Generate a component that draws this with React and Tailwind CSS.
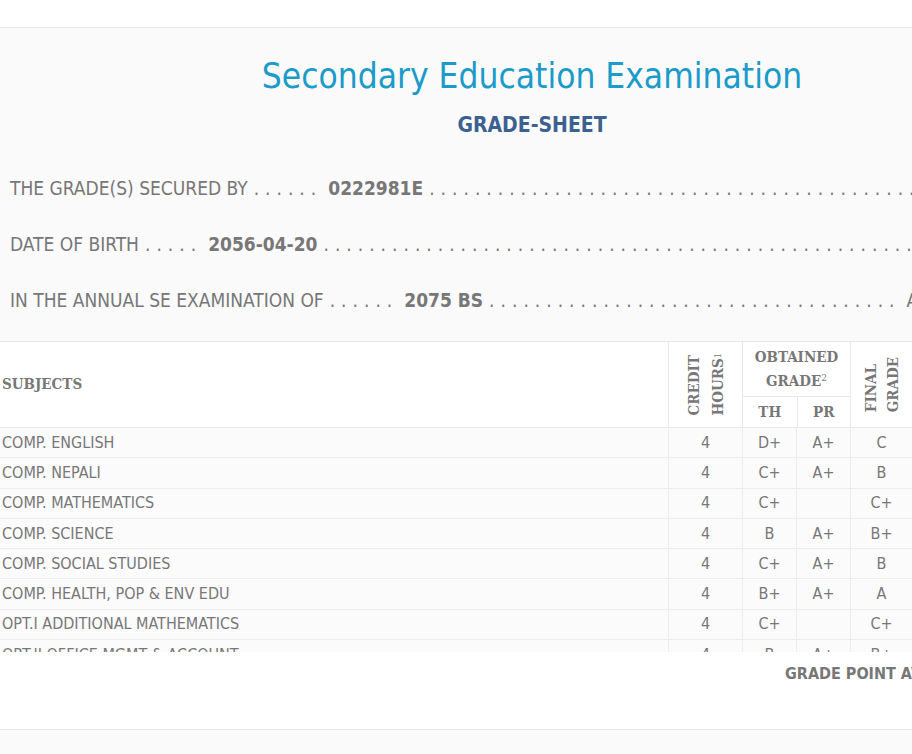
import React from 'react';

const rows = [
  ['COMP. ENGLISH', '4', 'D+', 'A+', 'C'],
  ['COMP. NEPALI', '4', 'C+', 'A+', 'B'],
  ['COMP. MATHEMATICS', '4', 'C+', '', 'C+'],
  ['COMP. SCIENCE', '4', 'B', 'A+', 'B+'],
  ['COMP. SOCIAL STUDIES', '4', 'C+', 'A+', 'B'],
  ['COMP. HEALTH, POP & ENV EDU', '4', 'B+', 'A+', 'A'],
  ['OPT.I ADDITIONAL MATHEMATICS', '4', 'C+', '', 'C+'],
  ['OPT.II OFFICE MGMT & ACCOUNT', '4', 'B', 'A+', 'B+'],
  ['COMP. ENGLISH', '4', 'D+', 'A+', 'C'],
];

const cond = "font-['DejaVu_Sans_Condensed',sans-serif]";
const head = "font-['DejaVu_Serif_Condensed',serif] font-bold";

const Dots = ({ n }) => (
  <span className="tracking-[6px] px-[6px]">{'.'.repeat(n)}</span>
);

const InfoLine = ({ children }) => (
  <div className="h-[56px] flex items-center pl-[10px] whitespace-nowrap text-[19px] text-[#777]">
    {children}
  </div>
);

export default function App() {
  return (
    <div className={`w-[912px] h-[754px] overflow-hidden bg-white ${cond}`}>
      <div className="h-[28px] border-b border-[#e8e8e8] bg-white" />
      <div className="w-[1064px] bg-[#fafafa]">
        <div className="pt-[27px] text-center">
          <h1 className="text-[35px] leading-[42px] text-[#1b9bc9]">Secondary Education Examination</h1>
          <h2 className="mt-[15px] text-[21px] leading-[26px] font-bold text-[#3b6190]">GRADE-SHEET</h2>
        </div>
        <div className="pt-[22px] pb-[13px] overflow-hidden">
          <InfoLine>
            THE GRADE(S) SECURED BY<Dots n={6} /><b>0222981E</b><Dots n={60} />
          </InfoLine>
          <InfoLine>
            DATE OF BIRTH<Dots n={5} /><b>2056-04-20</b><Dots n={70} />
          </InfoLine>
          <InfoLine>
            IN THE ANNUAL SE EXAMINATION OF<Dots n={6} /><b>2075 BS</b><Dots n={36} />AND IS AWARDED
          </InfoLine>
        </div>
      </div>
      <div className="w-[1064px] h-[311px] overflow-hidden border-t border-[#e8e8e8] bg-[#fbfbfb] text-[#777]">
        <div className="flex h-[86px] bg-white border-b border-[#e8e8e8]">
          <div className={`w-[668px] shrink-0 flex items-center pl-[2px] text-[15px] ${head}`}>SUBJECTS</div>
          <div className={`w-[74px] shrink-0 border-l border-[#e8e8e8] flex items-center justify-center text-[15px] ${head}`}>
            <div className="[writing-mode:vertical-rl] rotate-180 leading-[24px] text-left">
              CREDIT<br />HOURS<span className="text-[9px] font-normal align-top">1</span>
            </div>
          </div>
          <div className="w-[108px] shrink-0 border-l border-[#e8e8e8] flex flex-col">
            <div className={`h-[54px] flex flex-col items-center justify-center text-[15px] leading-[24px] ${head}`}>
              <span>OBTAINED</span>
              <span>GRADE<sup className="text-[10px] font-normal">2</sup></span>
            </div>
            <div className={`flex-1 flex border-t border-[#e8e8e8] text-[15px] ${head}`}>
              <div className="w-[54px] flex items-center justify-center">TH</div>
              <div className="w-[54px] border-l border-[#e8e8e8] flex items-center justify-center">PR</div>
            </div>
          </div>
          <div className={`w-[62px] shrink-0 border-l border-[#e8e8e8] flex items-center justify-center text-[15px] ${head}`}>
            <div className="[writing-mode:vertical-rl] rotate-180 leading-[22px] text-left">
              FINAL<br />GRADE
            </div>
          </div>
          <div className={`w-[80px] shrink-0 border-l border-[#e8e8e8] flex items-center justify-center text-[15px] ${head}`}>
            <div className="[writing-mode:vertical-rl] rotate-180 leading-[22px] text-left">
              GRADE<br />POINT
            </div>
          </div>
          <div className={`flex-1 min-w-0 border-l border-[#e8e8e8] flex items-center justify-center text-[12px] ${head}`}>REMARKS</div>
        </div>
        {rows.map((r, i) => (
          <div key={i} className="flex h-[30.3px] border-b border-[#ececec] text-[16px] items-stretch">
            <div className="w-[668px] shrink-0 flex items-center pl-[2px]">{r[0]}</div>
            <div className="w-[74px] shrink-0 border-l border-[#ececec] flex items-center justify-center">{r[1]}</div>
            <div className="w-[54px] shrink-0 border-l border-[#ececec] flex items-center justify-center">{r[2]}</div>
            <div className="w-[54px] shrink-0 border-l border-[#ececec] flex items-center justify-center">{r[3]}</div>
            <div className="w-[62px] shrink-0 border-l border-[#ececec] flex items-center justify-center">{r[4]}</div>
            <div className="w-[80px] shrink-0 border-l border-[#ececec] flex items-center justify-center">2.8</div>
            <div className="flex-1 min-w-0 border-l border-[#ececec]" />
          </div>
        ))}
      </div>
      <div className="w-[1064px] h-[78px] bg-white border-b border-[#e8e8e8] pt-[10px] pl-[785px]">
        <span className="text-[16px] font-bold text-[#777] whitespace-nowrap">GRADE POINT AVERAGE (GPA) 2.85</span>
      </div>
      <div className="h-[30px] bg-[#fafafa]" />
    </div>
  );
}
